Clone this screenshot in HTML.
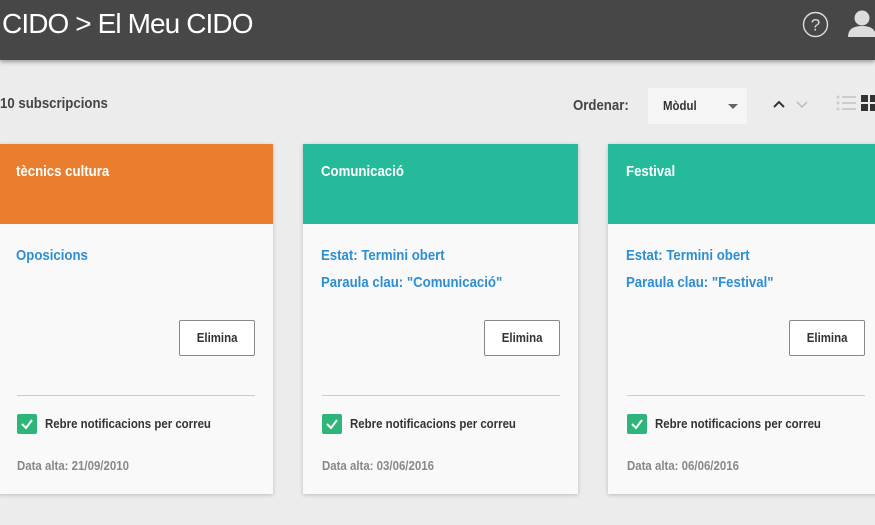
<!DOCTYPE html>
<html><head><meta charset="utf-8"><style>
*{margin:0;padding:0;box-sizing:border-box}
body{width:875px;height:525px;overflow:hidden;background:#ececec;font-family:"Liberation Sans",sans-serif;font-weight:bold;position:relative}
.n{display:inline-block;transform:scaleX(.88);transform-origin:left center;white-space:nowrap}
.hdr{position:absolute;left:0;top:0;width:875px;height:60px;background:#474747;box-shadow:0 2px 4px rgba(0,0,0,.35)}
.title{position:absolute;left:2px;top:8px;color:#fff;font-family:"Liberation Sans",sans-serif;font-weight:normal;font-size:28px;letter-spacing:-.9px}
.abs{position:absolute}
.card{position:absolute;top:144px;width:275px;height:350px;background:#f9f9f9;box-shadow:0 1px 4px rgba(0,0,0,.2)}
.ch{height:80px;padding:19px 18px;color:#fff;font-size:15px}
.lk{position:absolute;left:18px;color:#2e8fd0;font-size:15px}
.btn{position:absolute;left:181px;top:176px;width:76px;height:36px;border:1px solid #888;border-radius:2px;background:#fff;color:#333;font-size:13px;text-align:center;line-height:34px}
.btn .n{transform-origin:center center}
.hr{position:absolute;left:19px;top:251px;width:238px;border-top:1px solid #ccc}
.cb{position:absolute;left:19px;top:270px;width:20px;height:20px;background:#2db57a;border-radius:2px}
.nt{position:absolute;left:47px;top:272px;font-size:13px;color:#333}
.dt{position:absolute;left:19px;top:314px;font-size:13px;color:#888}
</style></head><body>
<div class="hdr"><div class="title">CIDO &gt; El Meu CIDO</div>
<svg class="abs" style="left:802px;top:11px" width="27" height="27" viewBox="0 0 27 27"><circle cx="13.5" cy="13.5" r="12" fill="none" stroke="#ddd" stroke-width="1.4"/><text x="13.5" y="19.5" text-anchor="middle" font-family="Liberation Sans" font-weight="normal" font-size="17" fill="#ddd">?</text></svg>
<svg class="abs" style="left:847px;top:9px" width="30" height="28" viewBox="0 0 30 28"><circle cx="15" cy="9" r="7.5" fill="#ddd"/><path d="M1 28 Q1 17 15 17 Q29 17 29 28Z" fill="#ddd"/></svg>
</div>
<div class="abs" style="left:0;top:95px;font-size:15px;color:#444"><span class="n">10 subscripcions</span></div>
<div class="abs" style="left:573px;top:97px;font-size:15px;color:#444"><span class="n">Ordenar:</span></div>
<div class="abs" style="left:648px;top:88px;width:99px;height:36px;background:#f5f5f5"><span class="abs n" style="left:15px;top:10px;font-size:13px;color:#333">Mòdul</span><span class="abs" style="left:80px;top:16px;border:5px solid transparent;border-top:5px solid #666"></span></div>
<svg class="abs" style="left:772px;top:98px" width="40" height="12"><path d="M2 9 L7 4 L12 9" stroke="#333" stroke-width="2" fill="none"/><path d="M25 4 L30 9 L35 4" stroke="#bbb" stroke-width="1.5" fill="none"/></svg>
<svg class="abs" style="left:836px;top:94px" width="40" height="18"><g fill="#ccc"><circle cx="2" cy="3" r="1.5"/><circle cx="2" cy="9" r="1.5"/><circle cx="2" cy="15" r="1.5"/><rect x="6" y="2" width="14" height="2"/><rect x="6" y="8" width="14" height="2"/><rect x="6" y="14" width="14" height="2"/></g><g fill="#333"><rect x="25" y="1" width="7" height="7"/><rect x="34" y="1" width="7" height="7"/><rect x="25" y="10" width="7" height="7"/><rect x="34" y="10" width="7" height="7"/></g></svg>

<div class="card" style="left:-2px"><div class="ch" style="background:#e87e2e"><span class="n">tècnics cultura</span></div>
<div class="lk" style="top:103px"><span class="n">Oposicions</span></div>
<div class="btn"><span class="n">Elimina</span></div><div class="hr"></div>
<div class="cb"><svg width="20" height="20"><path d="M5 10 L9 14 L15 6" stroke="#fff" stroke-width="2" fill="none"/></svg></div>
<div class="nt"><span class="n">Rebre notificacions per correu</span></div><div class="dt"><span class="n">Data alta: 21/09/2010</span></div></div>

<div class="card" style="left:303px"><div class="ch" style="background:#25ba9a"><span class="n">Comunicació</span></div>
<div class="lk" style="top:103px"><span class="n">Estat: Termini obert</span></div><div class="lk" style="top:130px"><span class="n">Paraula clau: "Comunicació"</span></div>
<div class="btn"><span class="n">Elimina</span></div><div class="hr"></div>
<div class="cb"><svg width="20" height="20"><path d="M5 10 L9 14 L15 6" stroke="#fff" stroke-width="2" fill="none"/></svg></div>
<div class="nt"><span class="n">Rebre notificacions per correu</span></div><div class="dt"><span class="n">Data alta: 03/06/2016</span></div></div>

<div class="card" style="left:608px"><div class="ch" style="background:#25ba9a"><span class="n">Festival</span></div>
<div class="lk" style="top:103px"><span class="n">Estat: Termini obert</span></div><div class="lk" style="top:130px"><span class="n">Paraula clau: "Festival"</span></div>
<div class="btn"><span class="n">Elimina</span></div><div class="hr"></div>
<div class="cb"><svg width="20" height="20"><path d="M5 10 L9 14 L15 6" stroke="#fff" stroke-width="2" fill="none"/></svg></div>
<div class="nt"><span class="n">Rebre notificacions per correu</span></div><div class="dt"><span class="n">Data alta: 06/06/2016</span></div></div>
</body></html>
